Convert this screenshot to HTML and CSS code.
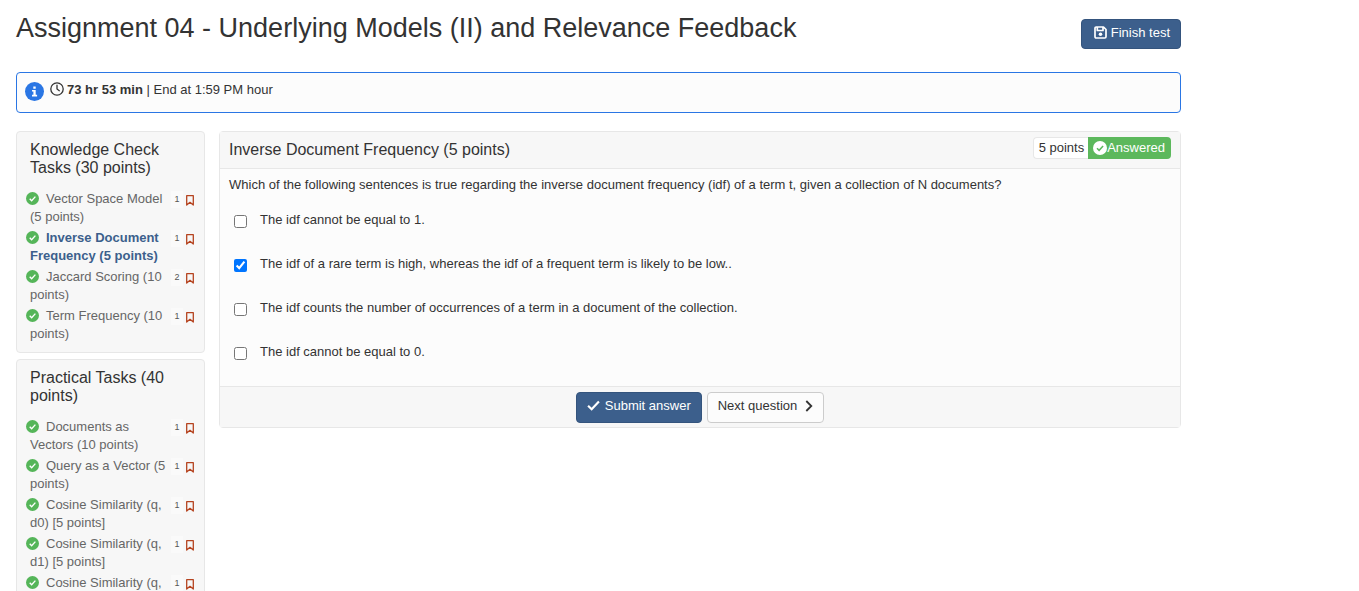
FILE: index.html
```html
<!DOCTYPE html>
<html lang="en">
<head>
<meta charset="utf-8">
<title>Assignment 04</title>
<link rel="stylesheet" href="styles.css">
</head>
<body>
<svg class="defs" aria-hidden="true">
  <symbol id="done" viewBox="0 0 14 14"><circle cx="7" cy="7" r="7" fill="currentColor"/><path d="M4 7.2l2.1 2.1L10.100 5" fill="none" class="tick" stroke-width="1.500"/></symbol>
  <symbol id="mark" viewBox="0 0 8 11"><path d="M.7.700h6.600v9.300L4 7.300.7 10z" fill="none" stroke="currentColor" stroke-width="1.300" stroke-linejoin="round"/></symbol>
</svg>
<div class="page">
  <header class="top">
    <h1 class="title">Assignment 04 - Underlying Models (II) and Relevance Feedback</h1>
    <button class="btn primary finish" type="button">
      <svg class="i-save" viewBox="0 0 13 13" fill="none" stroke="currentColor" stroke-width="1.700" stroke-linejoin="round"><path d="M1 2.200Q1 1 2.200 1H9.500L12 3.500V10.800Q12 12 10.800 12H2.200Q1 12 1 10.800zM3.300 1.200v3.300h5.700V1.200"/><circle cx="6.500" cy="8.200" r="1.800" fill="currentColor" stroke="none"/></svg>
      Finish test
    </button>
  </header>

  <div class="notice">
    <svg class="i-info" viewBox="0 0 19 19"><circle cx="9.500" cy="9.500" r="9.500" fill="#2a76e4"/><path d="M8.300 4.500h2.400v2.300H8.300zM7 8h3.700v4.800h1.400v1.700H7v-1.700h1.400V9.600H7z" fill="#fff"/></svg>
    <p class="time"><svg class="i-clock" viewBox="0 0 14 14" fill="none" stroke="currentColor" stroke-width="1.300" stroke-linecap="round"><circle cx="7" cy="7" r="6.200"/><path d="M7 3.200V7l2.300 1.700"/></svg><strong>73 hr 53 min</strong> | End at 1:59 PM hour</p>
  </div>

  <div class="columns">
    <nav class="side">
      <section class="panel tasks">
        <h2 class="heading">Knowledge Check Tasks (30 points)</h2>
        <ul class="list">
          <li class="item"><a class="link" href="#"><svg class="i-done"><use href="#done"/></svg>Vector Space Model (5 points)</a><span class="count">1</span><svg class="i-mark"><use href="#mark"/></svg></li>
          <li class="item"><a class="link current" href="#"><svg class="i-done"><use href="#done"/></svg>Inverse Document Frequency (5 points)</a><span class="count">1</span><svg class="i-mark"><use href="#mark"/></svg></li>
          <li class="item"><a class="link" href="#"><svg class="i-done"><use href="#done"/></svg>Jaccard Scoring (10 points)</a><span class="count">2</span><svg class="i-mark"><use href="#mark"/></svg></li>
          <li class="item"><a class="link" href="#"><svg class="i-done"><use href="#done"/></svg>Term Frequency (10 points)</a><span class="count">1</span><svg class="i-mark"><use href="#mark"/></svg></li>
        </ul>
      </section>
      <section class="panel tasks">
        <h2 class="heading">Practical Tasks (40 points)</h2>
        <ul class="list">
          <li class="item"><a class="link" href="#"><svg class="i-done"><use href="#done"/></svg>Documents as Vectors (10 points)</a><span class="count">1</span><svg class="i-mark"><use href="#mark"/></svg></li>
          <li class="item"><a class="link" href="#"><svg class="i-done"><use href="#done"/></svg>Query as a Vector (5 points)</a><span class="count">1</span><svg class="i-mark"><use href="#mark"/></svg></li>
          <li class="item"><a class="link" href="#"><svg class="i-done"><use href="#done"/></svg>Cosine Similarity (q, d0) [5 points]</a><span class="count">1</span><svg class="i-mark"><use href="#mark"/></svg></li>
          <li class="item"><a class="link" href="#"><svg class="i-done"><use href="#done"/></svg>Cosine Similarity (q, d1) [5 points]</a><span class="count">1</span><svg class="i-mark"><use href="#mark"/></svg></li>
          <li class="item"><a class="link" href="#"><svg class="i-done"><use href="#done"/></svg>Cosine Similarity (q,</a><span class="count">1</span><svg class="i-mark"><use href="#mark"/></svg></li>
        </ul>
      </section>
    </nav>

    <main class="panel question">
      <header class="q-head">
        <h2 class="heading">Inverse Document Frequency (5 points)</h2>
        <div class="badges"><span class="points">5 points</span><span class="answered"><svg class="i-answered"><use href="#done"/></svg>Answered</span></div>
      </header>
      <form class="q-form">
        <fieldset class="q-body">
          <legend class="q-text">Which of the following sentences is true regarding the inverse document frequency (idf) of a term t, given a collection of N documents?</legend>
          <label class="option"><input class="box" type="checkbox">The idf cannot be equal to 1.</label>
          <label class="option"><input class="box" type="checkbox" checked>The idf of a rare term is high, whereas the idf of a frequent term is likely to be low..</label>
          <label class="option"><input class="box" type="checkbox">The idf counts the number of occurrences of a term in a document of the collection.</label>
          <label class="option"><input class="box" type="checkbox">The idf cannot be equal to 0.</label>
        </fieldset>
        <footer class="q-foot">
          <button class="btn primary" type="button"><svg class="i-check" viewBox="0 0 12 10" fill="none" stroke="currentColor" stroke-width="2"><path d="M1 5.200l3.300 3.300L11 1.300"/></svg>Submit answer</button>
          <button class="btn" type="button">Next question<svg class="i-next" viewBox="0 0 8 12" fill="none" stroke="currentColor" stroke-width="1.800"><path d="M1.300 1l5 5-5 5"/></svg></button>
        </footer>
      </form>
    </main>
  </div>
</div>
</body>
</html>
```
FILE: styles.css
```css
* { box-sizing: border-box; }
html, body { height: 100%; }
body {
  margin: 0;
  overflow: hidden;
  background: #fff;
  color: #333;
  font: 13px/18px "Liberation Sans", Arial, sans-serif;
}
.defs { display: none; }
svg { flex: none; }
h1, h2, p, ul { margin: 0; padding: 0; font-weight: normal; }
.page { max-width: 1197px; padding: 12px 16px 0; }
.top { display: flex; justify-content: space-between; align-items: flex-start; }
.title { font-size: 27px; line-height: 32px; }
.btn {
  display: flex;
  align-items: center;
  gap: 5px;
  height: 31px;
  padding: 0 10px 4px;
  border: 1px solid #ccc;
  border-radius: 4px;
  background: #fcfcfc;
  color: #333;
  font: inherit;
}
.primary { border-color: #34547d; background: #3c5f8c; color: #fff; }
.finish { gap: 4px; height: 30px; margin-top: 7px; padding: 0 10px 3px 12px; }
.notice {
  display: flex;
  gap: 6px;
  margin-top: 23px;
  padding: 8px;
  border: 1px solid #2a76e4;
  border-radius: 4px;
  background: #fcfcfc;
}
.i-info { width: 19px; height: 19px; margin: 1px 0 3px; }
.i-clock { width: 14px; height: 14px; margin-right: 3px; vertical-align: -2px; }
.i-save { width: 13px; height: 13px; }
.columns { display: grid; grid-template-columns: 189px 1fr; gap: 14px; align-items: start; margin-top: 18px; }
.panel { border: 1px solid #e7e7e7; border-radius: 4px; background: #fcfcfc; }
.side { display: grid; gap: 6px; }
.tasks { padding: 9px 9px 6px; background: #f7f7f7; }
.heading { font-size: 16px; line-height: 18px; }
.tasks .heading { padding: 0 4px; }
.list { margin-top: 13px; list-style: none; }
.item { display: flex; align-items: flex-start; padding-bottom: 3px; }
.link { flex: 1; padding-left: 4px; color: #666; text-decoration: none; }
.current { color: #3c5f8c; font-weight: bold; }
.i-done { width: 13px; height: 13px; margin: 0 7px 0 -4px; vertical-align: -2px; color: #55b559; }
.count {
  width: 12px;
  margin: 1px 3px 0 0;
  background: #fafafa;
  color: #555;
  font-size: 9px;
  line-height: 17px;
  text-align: center;
}
.i-mark { width: 8px; height: 11px; margin: 5px 1px 0 0; color: #b5431f; }
.q-head {
  display: flex;
  justify-content: space-between;
  padding: 5px 9px 9px;
  border-bottom: 1px solid #e7e7e7;
  background: #f7f7f7;
}
.q-head .heading { margin-top: 4px; }
.badges { display: flex; line-height: 20px; }
.points { padding: 0 4px 0 5px; border: 1px solid #e7e7e7; border-right: 0; border-radius: 4px 0 0 4px; background: #fff; }
.answered { display: flex; align-items: center; padding: 0 6px 0 5px; border-radius: 0 4px 4px 0; background: #5cb85c; color: #fff; }
.i-answered { --tick: #5cb85c; width: 14px; height: 14px; color: #fff; }
.tick { stroke: var(--tick, #fff); }
.q-body { display: grid; margin: 0; padding: 7px 9px 16px; border: 0; }
.q-text { padding: 0; float: left; }
.option { display: flex; align-items: center; gap: 13px; padding: 17px 0 9px 5px; }
.box { width: 13px; height: 13px; margin: 3px 0 0; padding: 0; }
.q-foot { display: flex; justify-content: center; gap: 5px; padding: 5px 9px 4px; border-top: 1px solid #e7e7e7; background: #f7f7f7; }
.i-check { width: 13px; height: 11px; }
.i-next { width: 8px; height: 12px; margin-left: 3px; }
```
